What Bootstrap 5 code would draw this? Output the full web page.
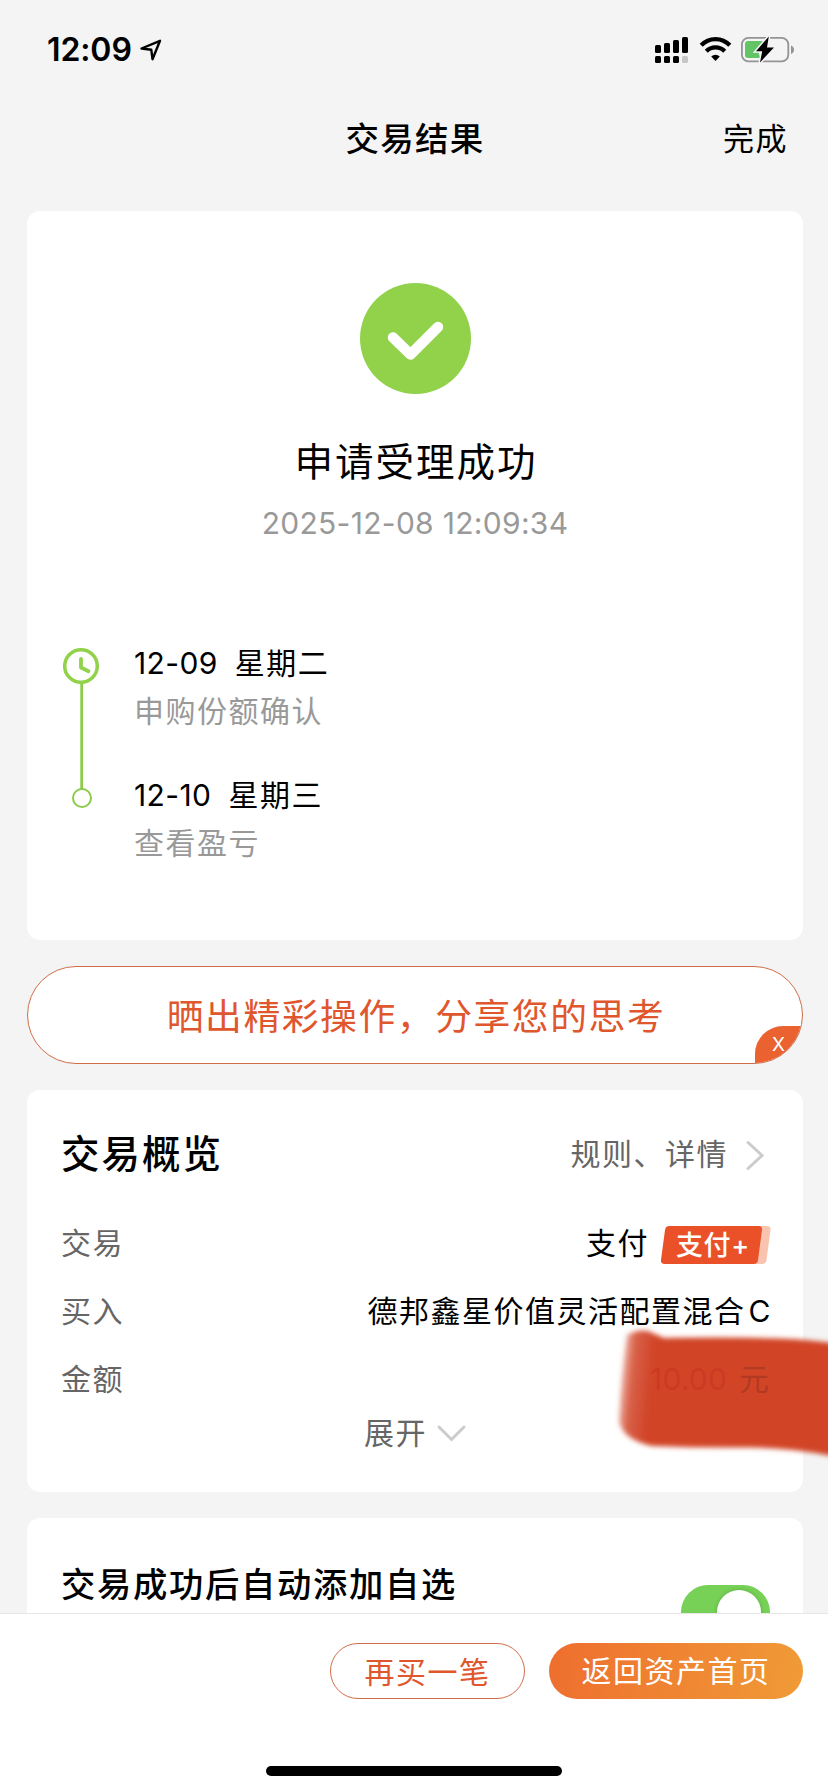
<!DOCTYPE html>
<html lang="zh-CN">
<head>
<meta charset="utf-8">
<meta name="viewport" content="width=device-width, initial-scale=1">
<title>交易结果</title>
<link href="https://cdn.jsdelivr.net/npm/bootstrap@5.3.0/dist/css/bootstrap.min.css" rel="stylesheet">
<style>
body{background:#f4f4f4;color:#000;font-family:Inter,"Noto Sans CJK SC",sans-serif;font-size:30px;line-height:48px;letter-spacing:1.5px;height:1792px;overflow:hidden}
svg{display:block;flex:none}
.screen{width:828px;height:1792px}
.status{height:99px;padding:0 33px 0 47px}
.clock-text{font-size:32px;font-weight:600;letter-spacing:-.1px}
.titlebar{height:80px;padding-left:2px}
.titlebar h1{font-size:33.5px;font-weight:500;letter-spacing:1.3px;line-height:48px}
.done{right:40px;top:16px;font-size:31px}
.scroller{height:1402px;padding:0 25px 0 27px;margin-top:32px;gap:26px}
.panel{background:#fff;border:0;border-radius:13px;flex:none}
.result{height:729px;padding:72px 36px 0}
.result h2{font-size:38.5px;font-weight:400;letter-spacing:2px;margin:44px 0 0;padding-left:2px;line-height:48px}
.stamp{color:#999;font-size:30px;letter-spacing:.3px;margin-top:13px}
.soft{color:#999}
.dim{color:#666}
.steps{margin-top:92px;gap:33px}
.steps>svg{margin-top:7px}
.second{margin-top:36px}
.digits{letter-spacing:.4px;margin-right:17px}
.share{height:98px;border:1.5px solid #cf6d48;border-radius:49px;color:#e0562d;font-size:36.8px;letter-spacing:1.55px;background:#fff;overflow:hidden;flex:none;padding:4px 0 0 2px}
.closer{right:-2px;bottom:-2px;width:49px;height:39px;background:#e9622f;color:#fff;border-radius:28px 0 0 0;font-size:19px;line-height:38px;letter-spacing:0;padding-right:2px}
.overview{height:402px;padding:40px 33px 0 34px}
.overview h3{font-size:38.5px;font-weight:500;letter-spacing:2px;line-height:48px;margin:0}
.detail{margin-right:2px}
.detail svg{margin:2px 0 0 16px}
.rows{margin-top:31px}
.line{height:68px;line-height:68px}
.latin{margin:0 -2px 0 3px}
.paytag{width:110px;height:38px;margin:3px -1px 0 12px}
.paytag span{left:15px;top:0;line-height:39px;font-size:27px;font-weight:500;color:#fff;letter-spacing:.6px}
.more{margin-top:-4px}
.brush{left:600px;top:1310px}
.favor{height:180px;padding:43px 33px 0 34px}
.favor .name{font-size:34.3px;font-weight:500;letter-spacing:1.7px}
.toggle{width:89px;height:54px;border-radius:27px;background:#76d156;margin-top:24px;padding:5px 9px 0 0}
.knob{width:44px;height:44px;border-radius:50%;background:#fff;box-shadow:0 0 4px rgba(0,0,0,.2)}
.actions{height:179px;background:#fff;border-top:1px solid #e6e6e6;padding:29px 25px 0 0;gap:24px}
.actions .btn{height:56px;border-radius:28px;font-size:30px;line-height:56px;padding:0;letter-spacing:1.5px;font-weight:400}
.again{width:195px;border:1.5px solid #cf6d48;color:#e0562d}
.home{width:254px;background:linear-gradient(100deg,#ee6e2e,#f09b37);color:#fff;border:0}
.homebar{left:266px;bottom:16px;width:296px;height:10px;border-radius:5px;background:#000}
</style>
</head>
<body>
<div class="screen position-relative d-flex flex-column overflow-hidden">
  <header class="status d-flex align-items-center justify-content-between flex-shrink-0">
    <div class="d-flex align-items-center gap-2">
      <span class="clock-text">12:09</span>
      <svg width="22" height="22" viewBox="0 0 22 22"><path d="M1.500 9.500 20 1.800 12.500 20.200 11.300 10.800Z" fill="none" stroke="#000" stroke-width="2.400" stroke-linejoin="round"/></svg>
    </div>
    <svg width="140" height="28" viewBox="655 36 140 28">
      <g><rect x="655" y="45" width="6" height="8" rx="1.500"/><rect x="664" y="43" width="6" height="10" rx="1.500"/><rect x="673" y="40" width="6" height="13" rx="1.500"/><rect x="682" y="37" width="6" height="16" rx="1.500"/><rect x="655" y="56" width="6" height="7" rx="1.500"/><rect x="664" y="56" width="6" height="7" rx="1.500"/><rect x="673" y="56" width="6" height="7" rx="1.500"/><rect x="682" y="56" width="6" height="7" rx="1.500" fill="#c6c6c6"/></g>
      <g fill="none" stroke="#000" stroke-width="4.200"><path d="M701.200 45.300a19.500 19.500 0 0 1 28.600 0"/><path d="M706.300 51.300a12.600 12.600 0 0 1 18.400 0"/></g>
      <path d="M715.500 61l-4.300-4.400a6.200 6.200 0 0 1 8.600 0z"/>
      <rect x="741.900" y="37.900" width="46.400" height="23.400" rx="6.500" fill="none" stroke="#949494" stroke-width="1.800"/>
      <path d="M791 45.500q3 1.200 3 4.200t-3 4.200z" fill="#949494"/>
      <path d="M748 41h15l-5.500 9 3 8h-12.500q-3 0-3-3v-11q0-3 3-3" fill="#63c466"/>
      <path d="M768.800 36.500 756 51.200h6.200L760 62.500 774 47.500h-7z" stroke="#f4f4f4" stroke-width="3"/>
      <path d="M768.800 36.500 756 51.200h6.200L760 62.500 774 47.500h-7z"/>
    </svg>
  </header>
  <nav class="titlebar position-relative d-flex justify-content-center flex-shrink-0">
    <h1 class="m-0 pt-3">交易结果</h1>
    <span class="done position-absolute">完成</span>
  </nav>

  <main class="scroller d-flex flex-column overflow-hidden flex-shrink-0">
    <section class="panel result">
      <div class="d-flex flex-column align-items-center text-center">
        <svg width="111" height="111" viewBox="0 0 111 111"><circle cx="55.500" cy="55.500" r="55.500" fill="#92d14a"/><path d="M33 54.500 50.500 71.500 78 44" fill="none" stroke="#fff" stroke-width="10.500" stroke-linecap="round" stroke-linejoin="round"/></svg>
        <h2>申请受理成功</h2>
        <div class="stamp">2025-12-08 12:09:34</div>
      </div>
      <div class="steps d-flex">
        <svg width="38" height="164" viewBox="63 646 38 164" fill="none" stroke="#8ccb4a"><path d="M81.700 683v106" stroke-width="2.800"/><circle cx="81" cy="666" r="16.300" stroke="#92d14a" stroke-width="3.500"/><path d="M81 659v8.500l7.500 3.700" stroke="#92d14a" stroke-width="3.800" stroke-linecap="round" stroke-linejoin="round"/><circle cx="82" cy="798" r="9" stroke-width="2"/></svg>
        <div>
          <div><span class="digits">12-09</span>星期二</div>
          <div class="soft">申购份额确认</div>
          <div class="second"><span class="digits">12-10</span>星期三</div>
          <div class="soft">查看盈亏</div>
        </div>
      </div>
    </section>

    <div class="share position-relative d-flex align-items-center justify-content-center">
      晒出精彩操作，分享您的思考
      <span class="closer position-absolute text-center">X</span>
    </div>

    <section class="panel overview">
      <div class="d-flex justify-content-between align-items-center">
        <h3>交易概览</h3>
        <div class="detail dim d-flex align-items-center">规则、详情
          <svg width="24" height="30" viewBox="0 0 24 30" fill="none" stroke="#ccc" stroke-width="3" stroke-linecap="round"><path d="M4 2.500 18 15.500 4 28.500"/></svg>
        </div>
      </div>
      <div class="rows">
        <div class="line d-flex justify-content-between"><span class="dim">交易</span>
          <span class="d-flex align-items-center">支付
            <span class="paytag position-relative">
              <svg width="110" height="38" viewBox="0 0 110 38"><path d="M12 0h94q4 0 3.500 4l-4 30q-.5 4-4.500 4h-92z" fill="#f8c4b0"/><path d="M8.500 0h89q4 0 3.500 4l-4 30q-.5 4-4.500 4h-89q-4 0-3.500-4l4-30q.5-4 4.500-4" fill="#ea5128"/></svg>
              <span class="position-absolute text-nowrap">支付+</span>
            </span>
          </span>
        </div>
        <div class="line d-flex justify-content-between"><span class="dim">买入</span><span class="text-nowrap">德邦鑫星价值灵活配置混合<span class="latin">C</span></span></div>
        <div class="line dim">金额</div>
        <div class="more d-flex justify-content-center align-items-center dim">展开
          <svg class="ms-2" width="32" height="20" viewBox="0 0 32 20" fill="none" stroke="#ccc" stroke-width="3" stroke-linecap="round"><path d="M4 4 16.500 16.500 29 4"/></svg>
        </div>
      </div>
    </section>

    <section class="panel favor d-flex justify-content-between align-items-start">
      <span class="name">交易成功后自动添加自选</span>
      <span class="toggle d-flex justify-content-end"><span class="knob"></span></span>
    </section>
  </main>

  <footer class="actions position-relative d-flex justify-content-end align-items-start flex-shrink-0">
    <button class="btn again">再买一笔</button>
    <button class="btn home">返回资产首页</button>
    <span class="homebar position-absolute"></span>
  </footer>

  <!-- marker stroke drawn over the amount -->
  <svg class="brush position-absolute" width="228" height="160" viewBox="600 1310 228 160">
    <defs>
      <linearGradient id="ink" gradientUnits="userSpaceOnUse" x1="619" y1="1400" x2="650" y2="1403"><stop offset="0" stop-color="#d14427" stop-opacity=".4"/><stop offset=".35" stop-color="#d14427" stop-opacity=".85"/><stop offset="1" stop-color="#d14427"/></linearGradient>
      <filter id="soft" x="-10%" y="-10%" width="120%" height="120%"><feGaussianBlur stdDeviation="2.400"/></filter>
    </defs>
    <path d="M627 1335Q637 1329 648 1331L664 1338Q735 1337 780 1338.500T850 1347V1460Q800 1448 750 1447.500Q700 1448 652 1446Q624 1440 619 1422Q621 1375 627 1335Z" fill="url(#ink)" filter="url(#soft)"/>
    <text x="650" y="1390" font-size="30" letter-spacing=".2" fill="#cb3a22">10.00</text>
    <text x="739" y="1390" font-size="30" letter-spacing="0" fill="#b33a22">元</text>
  </svg>
</div>
<script src="https://cdn.jsdelivr.net/npm/bootstrap@5.3.0/dist/js/bootstrap.bundle.min.js"></script>
</body>
</html>
